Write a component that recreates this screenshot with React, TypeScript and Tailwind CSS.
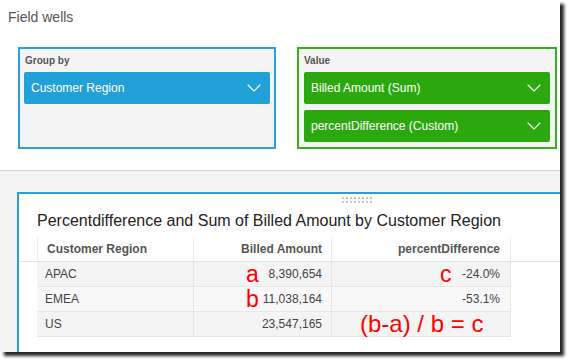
const Chevron = () => (
  <svg width="14" height="8" viewBox="0 0 14 8" fill="none" className="shrink-0">
    <polyline points="1,1 7,7 13,1" stroke="white" strokeWidth="1.1" strokeLinecap="round" strokeLinejoin="round" />
  </svg>
);

const Pill = ({ label, color }: { label: string; color: string }) => (
  <div className={`flex h-[32px] items-center justify-between rounded-[2px] pl-[7px] pr-[9px] text-[12px] text-white ${color}`}>
    <span>{label}</span>
    <Chevron />
  </div>
);

const rows = [
  { region: "APAC", amount: "8,390,654", pct: "-24.0%", a: "a", c: "c", bg: "bg-[#f4f4f4]" },
  { region: "EMEA", amount: "11,038,164", pct: "-53.1%", a: "b", c: "", bg: "bg-[#f8f8f8]" },
  { region: "US", amount: "23,547,165", pct: "", a: "", c: "", bg: "bg-[#f4f4f4]" },
];

export default function App() {
  return (
    <div className="h-[363px] w-[570px] bg-white font-['Liberation_Sans',Arial,sans-serif]">
      <div className="flex h-[352px] w-[560px] flex-col overflow-hidden bg-white shadow-[4px_4px_3px_rgba(0,0,0,0.85)]">
        {/* field wells */}
        <div className="h-[171px] shrink-0 border-b border-[#d6d6d6] bg-white">
          <div className="pl-[8px] pt-[7px] text-[14px] leading-[20px] text-[#555]">Field wells</div>
          <div className="mt-[20px] flex gap-[21px] pl-[18px]">
            <div className="h-[102px] w-[258px] border-2 border-[#2a9fd9] bg-[#f4f4f4] px-[4px] pt-[5px]">
              <div className="mb-[4px] h-[14px] pl-[1px] text-[10px] font-bold leading-[14px] text-[#555]">Group by</div>
              <Pill label="Customer Region" color="bg-[#22a0d8]" />
            </div>
            <div className="h-[102px] w-[260px] border-2 border-[#3aad1c] bg-[#f4f4f4] px-[5px] pt-[5px]">
              <div className="mb-[4px] h-[14px] text-[10px] font-bold leading-[14px] text-[#555]">Value</div>
              <div className="flex flex-col gap-[6px]">
                <Pill label="Billed Amount (Sum)" color="bg-[#2ba80d]" />
                <Pill label="percentDifference (Custom)" color="bg-[#2ba80d]" />
              </div>
            </div>
          </div>
        </div>

        {/* visual area */}
        <div className="flex-1 bg-[#f3f3f3] pl-[17px] pt-[21px]">
          <div className="h-full border-l-2 border-t-2 border-[#2a9fd9] bg-white">
            <div className="ml-[323px] mt-[3px] grid w-[30px] grid-cols-8 gap-[2px]">
              {Array.from({ length: 16 }).map((_, i) => (
                <span key={i} className="h-[2px] w-[2px] bg-[#c4c4c4]" />
              ))}
            </div>
            <div className="mt-[8px] pl-[18px] text-[16px] leading-[20px] text-[#222]">
              Percentdifference and Sum of Billed Amount by Customer Region
            </div>

            <div className="mt-[6px] text-[12px] text-[#444]">
              <div className="flex h-[25px] border-b border-[#e4e4e4] pl-[18px] font-bold text-[#555]">
                <div className="flex w-[157px] items-center border-l border-r border-[#ececec] pl-[9px]">Customer Region</div>
                <div className="flex w-[138px] items-center justify-end border-r border-[#ececec] pr-[9px]">Billed Amount</div>
                <div className="flex w-[179px] items-center justify-end border-r border-[#ececec] pr-[10px]">percentDifference</div>
              </div>
              {rows.map((r, i) => (
                <div key={r.region} className="flex pl-[18px]">
                  <div className={`flex h-[25px] w-[157px] items-center border-b border-r border-[#e6e6e6] pl-[8px] ${r.bg}`}>{r.region}</div>
                  <div className={`flex h-[25px] w-[138px] items-center border-b border-r border-[#e6e6e6] pr-[9px] ${r.bg}`}>
                    {r.a ? (
                      <span className="ml-[52px] text-[23px] leading-[24px] text-[#ff0000]">{r.a}</span>
                    ) : null}
                    <span className="ml-auto">{r.amount}</span>
                  </div>
                  <div className={`flex h-[25px] w-[179px] items-center border-b border-r border-[#e6e6e6] pr-[10px] ${r.bg}`}>
                    {r.c ? (
                      <span className="ml-[108px] text-[23px] leading-[24px] text-[#ff0000]">{r.c}</span>
                    ) : null}
                    {i === 2 ? (
                      <span className="ml-[28px] whitespace-nowrap text-[24px] leading-[24px] text-[#ff0000]">(b-a) / b = c</span>
                    ) : null}
                    <span className="ml-auto">{r.pct}</span>
                  </div>
                </div>
              ))}
            </div>
          </div>
        </div>
      </div>
    </div>
  );
}
